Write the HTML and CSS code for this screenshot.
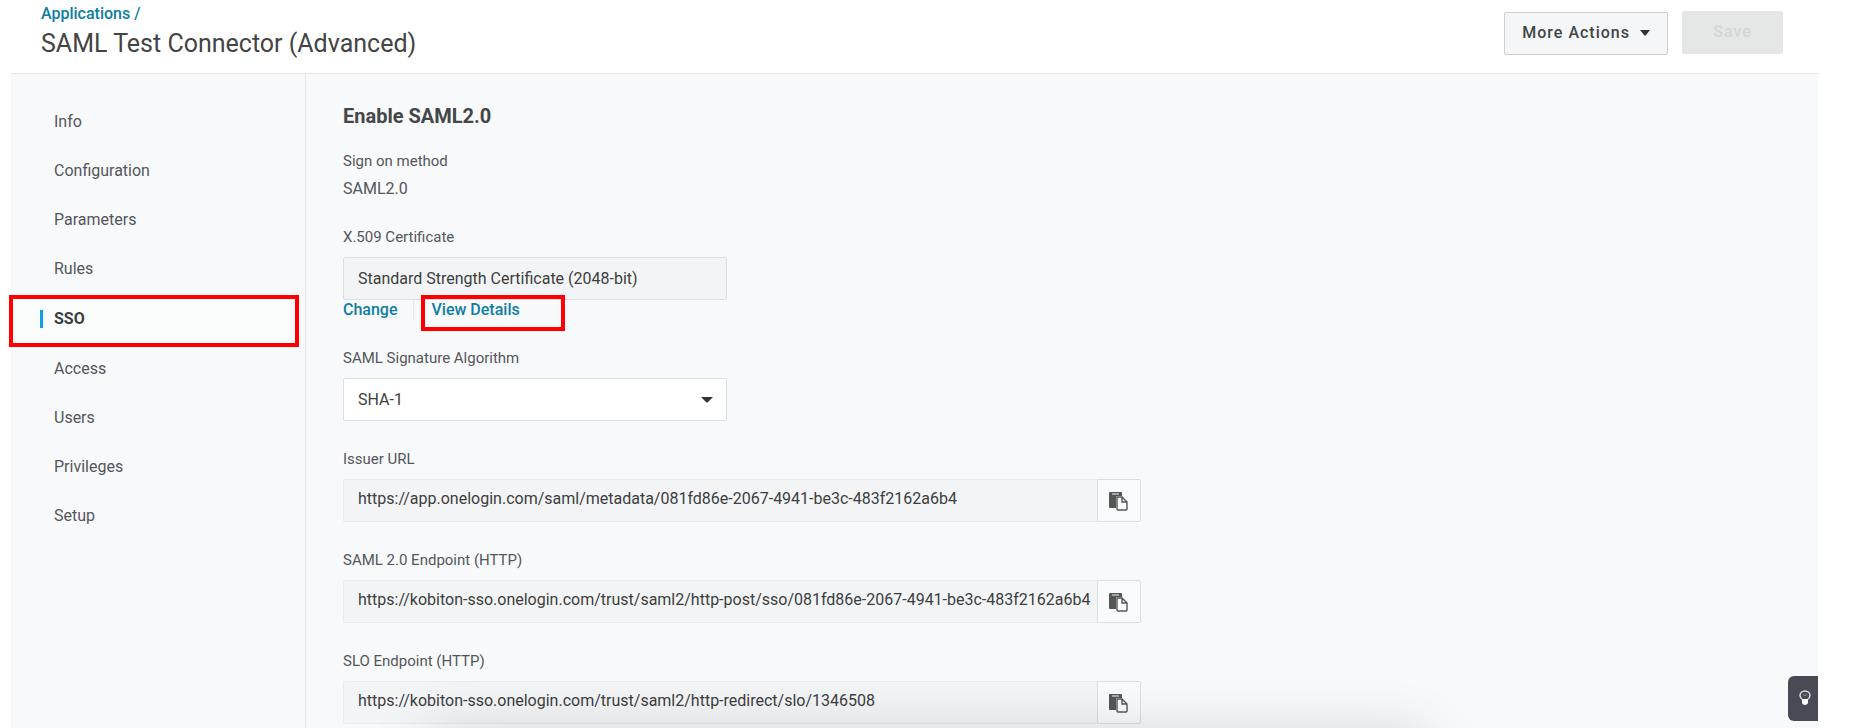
FILE: index.html
```html
<!DOCTYPE html>
<html lang="en">
	<head>
		<meta charset="utf-8">
		<title>SAML Test Connector (Advanced)</title>
		<link rel="stylesheet" href="styles.css">
	</head>

	<body>
		<div class="app">
			<header class="header">
				<div class="titles">
					<a class="crumb" href="#">Applications /</a>
					<h1>SAML Test Connector (Advanced)</h1>
				</div>
				<div class="actions">
					<button type="button" class="btn more">More Actions
						<svg width="10" height="6" viewBox="0 0 10 6"><path d="M0 0h10L6 5q-1 1-2 0z" fill="#333"/></svg>
					</button>
					<button type="button" class="btn save" disabled>Save</button>
				</div>
			</header>

			<div class="main">
				<nav class="side">
					<ul>
						<li><a href="#">Info</a></li>
						<li><a href="#">Configuration</a></li>
						<li><a href="#">Parameters</a></li>
						<li><a href="#">Rules</a></li>
						<li class="active"><span class="mark"></span><a href="#">SSO</a></li>
						<li><a href="#">Access</a></li>
						<li><a href="#">Users</a></li>
						<li><a href="#">Privileges</a></li>
						<li><a href="#">Setup</a></li>
					</ul>
				</nav>

				<form class="content">
					<h2>Enable SAML2.0</h2>
					<div class="method">
						<p class="label">Sign on method</p>
						<p class="value">SAML2.0</p>
					</div>

					<div class="field">
						<label class="label" for="cert">X.509 Certificate</label>
						<input id="cert" class="box" type="text" value="Standard Strength Certificate (2048-bit)" readonly>
						<div class="links">
							<a class="change" href="#">Change</a>
							<a class="view" href="#">View Details<span class="mark"></span></a>
						</div>
					</div>

					<div class="field">
						<label class="label" for="algorithm">SAML Signature Algorithm</label>
						<div class="select">
							<select id="algorithm" class="box">
								<option>SHA-1</option>
							</select>
							<svg width="12" height="6" viewBox="0 0 12 6"><path d="M0 0h12L7 5q-1 1-2 0z" fill="#333"/></svg>
						</div>
					</div>

					<div class="field">
						<label class="label" for="issuer">Issuer URL</label>
						<div class="copy">
							<input id="issuer" class="url" type="text" value="https://app.onelogin.com/saml/metadata/081fd86e-2067-4941-be3c-483f2162a6b4" readonly>
							<button type="button" aria-label="Copy Issuer URL">
								<svg width="20" height="20" viewBox="0 0 20 20">
									<path d="M1 0h11q1 0 1 1v3H7v12H1q-1 0-1-1V1q0-1 1-1z" fill="#555"/>
									<path d="M3 2h7" stroke="#f7f8fa" stroke-width="1"/>
									<path d="M8 5h5l5 5v7q0 1-1 1H9q-1 0-1-1zM13 5v5h5" fill="#f9fafc" stroke="#555" stroke-width="1.4"/>
								</svg>
							</button>
						</div>
					</div>

					<div class="field">
						<label class="label" for="endpoint">SAML 2.0 Endpoint (HTTP)</label>
						<div class="copy">
							<input id="endpoint" class="url" type="text" value="https://kobiton-sso.onelogin.com/trust/saml2/http-post/sso/081fd86e-2067-4941-be3c-483f2162a6b4" readonly>
							<button type="button" aria-label="Copy SAML 2.0 Endpoint">
								<svg width="20" height="20" viewBox="0 0 20 20">
									<path d="M1 0h11q1 0 1 1v3H7v12H1q-1 0-1-1V1q0-1 1-1z" fill="#555"/>
									<path d="M3 2h7" stroke="#f7f8fa" stroke-width="1"/>
									<path d="M8 5h5l5 5v7q0 1-1 1H9q-1 0-1-1zM13 5v5h5" fill="#f9fafc" stroke="#555" stroke-width="1.4"/>
								</svg>
							</button>
						</div>
					</div>

					<div class="field">
						<label class="label" for="slo">SLO Endpoint (HTTP)</label>
						<div class="copy">
							<input id="slo" class="url" type="text" value="https://kobiton-sso.onelogin.com/trust/saml2/http-redirect/slo/1346508" readonly>
							<button type="button" aria-label="Copy SLO Endpoint">
								<svg width="20" height="20" viewBox="0 0 20 20">
									<path d="M1 0h11q1 0 1 1v3H7v12H1q-1 0-1-1V1q0-1 1-1z" fill="#555"/>
									<path d="M3 2h7" stroke="#f7f8fa" stroke-width="1"/>
									<path d="M8 5h5l5 5v7q0 1-1 1H9q-1 0-1-1zM13 5v5h5" fill="#f9fafc" stroke="#555" stroke-width="1.4"/>
								</svg>
							</button>
						</div>
					</div>
				</form>
			</div>
		</div>

		<button type="button" class="tips" aria-label="Tips">
			<svg width="12" height="16" viewBox="0 0 12 16">
				<path d="M4 10Q1 8 1 5.500A5 4.500 0 0 1 11 5.500Q11 8 8 10z" fill="none" stroke="#dcdcdc" stroke-width="1.500"/>
				<path d="M4 4l2 2 2-2" fill="none" stroke="#8a8c92"/>
				<path d="M3 9h6v4q-1 2-3 2t-3-2z" fill="#fff"/>
			</svg>
		</button>
		<div class="shade"></div>
	</body>
</html>
```
FILE: styles.css
```css
*{
	box-sizing: border-box;
}
body,h1,h2,ul,li,p{
	margin: 0;
	padding: 0;
}
li{
	list-style: none;
}
body{
	background: #fff;
	color: #444;
	font-family: Roboto, "Liberation Sans", sans-serif;
	font-size: 16px;
	line-height: 24px;
	overflow: hidden;
}
a{
	color: #0d7ea2;
	text-decoration: none;
}
input,select,button{
	font: inherit;
	color: inherit;
	margin: 0;
}
svg{
	display: block;
}
.app{
	display: flex;
	flex-direction: column;
	min-height: 100vh;
	margin: 0 32px 0 11px;
}

/* header */
.header{
	display: flex;
	justify-content: space-between;
	align-items: flex-start;
	height: 74px;
	padding: 2px 35px 0 30px;
	border-bottom: 1px solid #e4e6e8;
}
.crumb{
	display: block;
	font-weight: 500;
}
h1{
	font-size: 25px;
	line-height: 36px;
	font-weight: 400;
}
.actions{
	display: flex;
	gap: 14px;
	padding-top: 9px;
}
.btn{
	display: flex;
	align-items: center;
	justify-content: center;
	height: 43px;
	padding: 0 17px 2px;
	border-radius: 2px;
	font-weight: 500;
	letter-spacing: 1px;
}
.more{
	gap: 10px;
	margin-top: 1px;
	background: #f5f6f8;
	border: 1px solid #ccced0;
}
.save{
	width: 101px;
	background: #e5e7e7;
	border: none;
	color: #d3d5d6;
}

.main{
	display: flex;
	flex: 1;
	background: #f8f9fb;
}

/* side menu */
.side{
	width: 295px;
	padding-top: 23px;
	border-right: 1px solid #e8eaed;
}
.side li{
	display: flex;
	align-items: center;
	height: 49px;
	padding-left: 43px;
}
.side a{
	color: #54565a;
}
.side .active{
	position: relative;
	height: 51px;
	padding-left: 29px;
}
.side .active a{
	position: relative;
	padding-left: 11px;
	border-left: 3px solid #0da2dc;
	color: #3c3e40;
	font-weight: 700;
	line-height: 18px;
}
.mark{
	position: absolute;
	border: 4px solid #f00;
}
.active .mark{
	top: 2px;
	left: -2px;
	right: 6px;
	height: 52px;
	background: #fbfdfd;
}

/* form */
.content{
	flex: 1;
	min-width: 0;
	padding: 28px 37px 0;
}
h2{
	font-size: 20px;
	line-height: 28px;
	font-weight: 700;
	color: #444648;
}
.method{
	padding: 19px 0 20px;
}
.method .value{
	line-height: 32px;
	color: #54565a;
}
.label{
	display: block;
	font-size: 15px;
	color: #54565a;
}
.field{
	margin-bottom: 26px;
}
.field .label{
	margin-bottom: 8px;
}
.box{
	display: block;
	width: 100%;
	max-width: 384px;
	height: 43px;
	padding: 0 14px;
	background: #f3f4f6;
	border: 1px solid #dcdee1;
	border-radius: 2px;
	color: #3c3e40;
}
.links{
	display: flex;
	height: 20px;
	line-height: 20px;
	font-weight: 500;
}
.change{
	padding-right: 15px;
	border-right: 1px solid #e4e6e9;
}
.view{
	position: relative;
	padding-left: 18px;
}
.view .mark{
	top: -5px;
	left: 7px;
	width: 144px;
	height: 36px;
}
.select{
	position: relative;
	max-width: 384px;
}
.select select{
	appearance: none;
	background: #fff;
}
.select svg{
	position: absolute;
	top: 19px;
	right: 14px;
	pointer-events: none;
}
.copy{
	display: flex;
	max-width: 798px;
	height: 43px;
}
.url{
	flex: 1;
	min-width: 0;
	padding: 0 0 3px 14px;
	background: #f3f4f6;
	border: 1px solid #ebecee;
	border-right: none;
	border-radius: 2px 0 0 2px;
	color: #3c3e40;
}
.copy button{
	display: flex;
	align-items: center;
	justify-content: center;
	width: 44px;
	padding: 2px 0 0;
	background: #f9fafc;
	border: 1px solid #dcdee1;
	border-radius: 0 2px 2px 0;
}

.tips{
	position: fixed;
	right: 32px;
	bottom: 7px;
	display: flex;
	align-items: center;
	justify-content: center;
	width: 30px;
	height: 45px;
	padding: 0 0 2px 3px;
	background: #484a54;
	border: none;
	border-radius: 6px 0 0 6px;
}
.shade{
	position: fixed;
	left: 23%;
	right: 23%;
	bottom: -100px;
	height: 90px;
	box-shadow: 0 0 60px rgba(0, 0, 0, .18);
	pointer-events: none;
}
```
